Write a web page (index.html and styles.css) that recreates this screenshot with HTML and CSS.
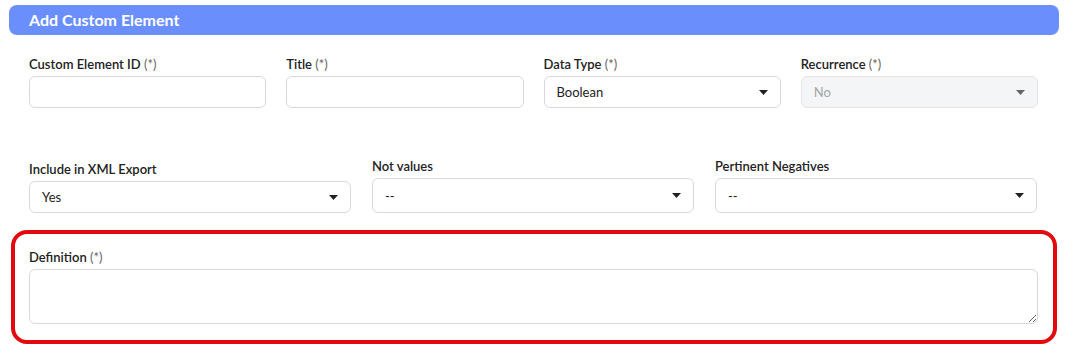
FILE: index.html
```html
<!DOCTYPE html>
<html lang="en">
<head>
 <meta charset="UTF-8">
 <meta name="viewport" content="width=device-width, initial-scale=1.0">
 <title>Add Custom Element</title>
 <link rel="stylesheet" href="styles.css">
</head>
<body>
 <header class="panel-head">Add Custom Element</header>
 <main class="form">
  <div class="row row-4">
   <div class="field">
    <label>Custom Element ID <span class="req">(*)</span></label>
    <input type="text" class="control">
   </div>
   <div class="field">
    <label>Title <span class="req">(*)</span></label>
    <input type="text" class="control">
   </div>
   <div class="field">
    <label>Data Type <span class="req">(*)</span></label>
    <div class="control select"><span>Boolean</span><svg class="caret" width="9" height="5" viewBox="0 0 9 5"><path d="M0 0h9L4.5 5z"/></svg></div>
   </div>
   <div class="field">
    <label>Recurrence <span class="req">(*)</span></label>
    <div class="control select disabled"><span>No</span><svg class="caret" width="9" height="5" viewBox="0 0 9 5"><path d="M0 0h9L4.5 5z"/></svg></div>
   </div>
  </div>

  <div class="row row-3">
   <div class="field">
    <label>Include in XML Export</label>
    <div class="control select short"><span>Yes</span><svg class="caret" width="9" height="5" viewBox="0 0 9 5"><path d="M0 0h9L4.5 5z"/></svg></div>
   </div>
   <div class="field">
    <label>Not values</label>
    <div class="control select tall"><span>--</span><svg class="caret" width="9" height="5" viewBox="0 0 9 5"><path d="M0 0h9L4.5 5z"/></svg></div>
   </div>
   <div class="field">
    <label>Pertinent Negatives</label>
    <div class="control select tall"><span>--</span><svg class="caret" width="9" height="5" viewBox="0 0 9 5"><path d="M0 0h9L4.5 5z"/></svg></div>
   </div>
  </div>

  <div class="highlight">
   <div class="field">
    <label>Definition <span class="req">(*)</span></label>
    <textarea class="control area"></textarea>
   </div>
  </div>
 </main>
</body>
</html>
```

FILE: styles.css
```css
body {
margin: 0;
padding: 5px 0 0;
background-color: #fff;
color: #222;
font-family: Lato, "Open Sans", sans-serif;
}
.panel-head {
margin: 0 9px 0 9px;
height: 30px;
line-height: 30px;
padding: 0 20px;
background-color: #6a8ffd;
color: #fff;
font-size: 16px;
font-weight: bold;
border-radius: 8px;
}
.form {
padding: 0 29px 0 29px;
}
.row {
display: grid;
align-items: end;
}
.row-4 {
grid-template-columns: repeat(4, 1fr);
column-gap: 20px;
margin-top: 21px;
padding-right: 1px;
}
.row-3 {
grid-template-columns: repeat(3, 1fr);
column-gap: 21px;
margin-top: 50px;
padding-right: 2px;
}
.field {
display: flex;
flex-direction: column;
}
label {
font-size: 13px;
line-height: 16px;
font-weight: 600;
color: #222;
margin-bottom: 4px;
}
.req {
font-weight: normal;
color: #666;
}
.control {
box-sizing: border-box;
height: 32px;
border: 1px solid #d9d9d9;
border-radius: 6px;
background-color: #fff;
font-family: Lato, sans-serif;
font-size: 13px;
color: #222;
margin: 0;
}
.select {
display: flex;
align-items: center;
justify-content: space-between;
padding: 0 12px 0 12px;
}
.select.short {
height: 32px;
}
.select.tall {
height: 35px;
}
.caret {
fill: #222;
}
.disabled {
background-color: #f4f5f7;
border-color: #e6e6e6;
color: #a5a5a5;
}
.disabled .caret {
fill: #666;
}
.highlight {
margin: 17px -18px 0 -18px;
border: 4px solid #e30a0f;
border-radius: 16px;
padding: 15px 15px 16px 14px;
}
.area {
height: 55px;
resize: vertical;
padding: 8px 12px;
}
```
